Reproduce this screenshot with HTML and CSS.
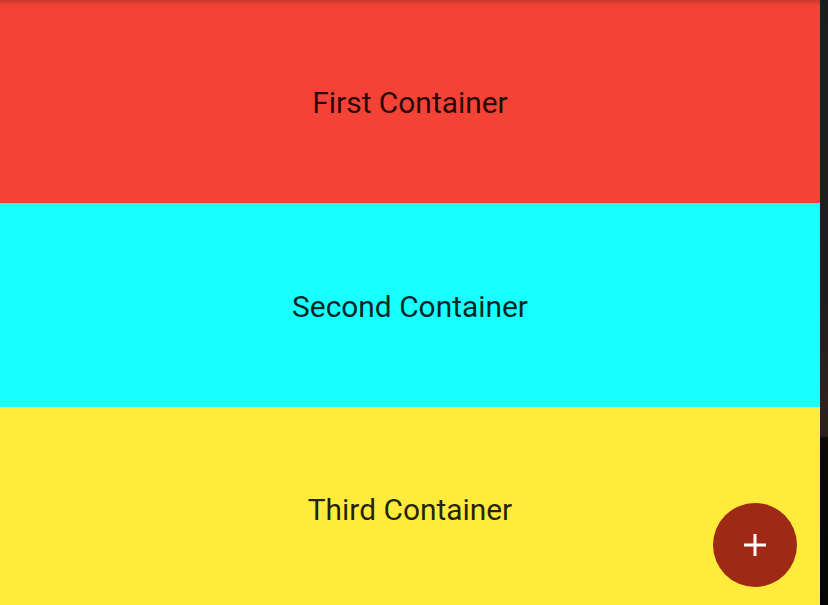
FILE: index.html
```html
<!DOCTYPE html>
<html>
<head>
<meta charset="utf-8">
<link rel="stylesheet" href="styles.css">
</head>
<body>
<div class="app">
  <main class="screen">
    <section class="box box-red"><span class="label">First Container</span></section>
    <section class="box box-cyan"><span class="label">Second Container</span></section>
    <section class="box box-yellow"><span class="label">Third Container</span></section>
    <div class="shadow"></div>
    <button class="fab" aria-label="Add">
      <svg width="24" height="24" viewBox="0 0 24 24"><path d="M12 1v22M1 12h22" stroke="#fff" stroke-width="3" fill="none"/></svg>
    </button>
  </main>
  <aside class="edge"></aside>
</div>
</body>
</html>
```
FILE: styles.css
```css
html, body {
  margin: 0;
  padding: 0;
  width: 828px;
  height: 605px;
  overflow: hidden;
}
.app {
  display: flex;
  width: 828px;
  height: 605px;
}
.screen {
  position: relative;
  width: 820px;
  height: 605px;
  display: flex;
  flex-direction: column;
  font-family: Roboto, "Liberation Sans", sans-serif;
}
.box {
  display: flex;
  align-items: center;
  justify-content: center;
  box-sizing: border-box;
  padding-top: 2px;
}
.box-red { height: 203px; background: #f44336; }
.box-cyan { height: 204px; background: #18ffff; }
.box-yellow { height: 198px; background: #ffeb3b; align-items: flex-start; padding-top: 0; }
.box-yellow .label { margin-top: 85px; }
.label {
  font-size: 29.9px;
  line-height: 35px;
  color: rgba(0, 0, 0, 0.87);
}
.shadow {
  position: absolute;
  left: 0;
  top: 0;
  width: 820px;
  height: 6px;
  background: linear-gradient(rgba(0,0,0,0.18), rgba(0,0,0,0));
}
.fab {
  position: absolute;
  left: 713px;
  top: 503px;
  width: 84px;
  height: 84px;
  border-radius: 50%;
  border: none;
  padding: 0;
  background: #9e2a16;
  display: flex;
  align-items: center;
  justify-content: center;
}
.edge {
  width: 8px;
  height: 605px;
  background: linear-gradient(#1b1e21 0, #1e1d1c 300px, #2e221c 400px, #2a1f1a 436px, #0b0908 438px, #050505 605px);
}
```
